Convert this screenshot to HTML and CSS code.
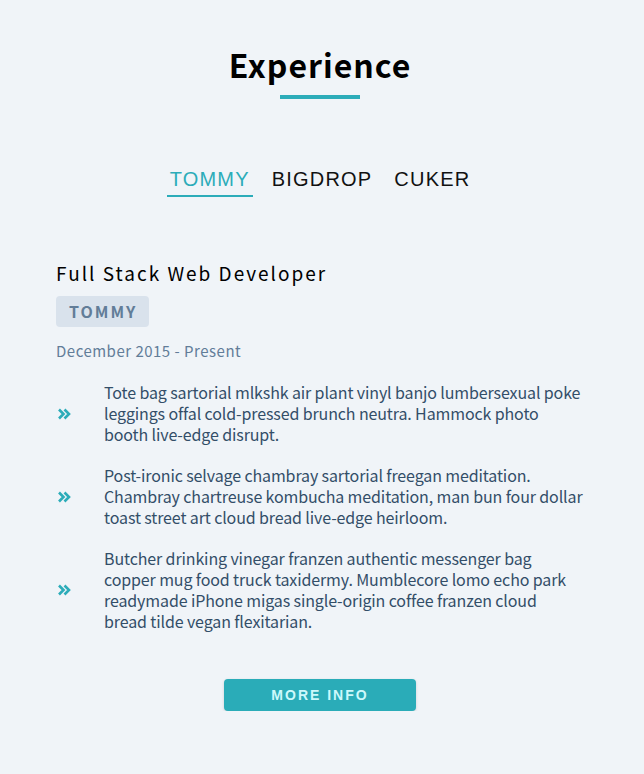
FILE: index.html
```html
<!DOCTYPE html>
<html>
<head>
<meta charset="utf-8">
<link rel="stylesheet" href="styles.css">
</head>
<body>
<section class="experience">
  <h1 class="title">Experience</h1>
  <div class="title-bar"></div>
  <nav class="tabs">
    <span class="tab active">TOMMY</span>
    <span class="tab">BIGDROP</span>
    <span class="tab">CUKER</span>
  </nav>
  <article class="job">
    <h3 class="job-title">Full Stack Web Developer</h3>
    <span class="company">TOMMY</span>
    <p class="dates">December 2015 - Present</p>
    <div class="duty">
      <svg class="chev" viewBox="0 0 14 12" width="14" height="12"><path d="M2 1.5 L6.5 6 L2 10.5 M7.5 1.5 L12 6 L7.5 10.5" fill="none" stroke="#2cacb9" stroke-width="2.6"/></svg>
      <p>Tote bag sartorial mlkshk air plant vinyl banjo lumbersexual poke leggings offal cold-pressed brunch neutra. Hammock photo booth live-edge disrupt.</p>
    </div>
    <div class="duty">
      <svg class="chev" viewBox="0 0 14 12" width="14" height="12"><path d="M2 1.5 L6.5 6 L2 10.5 M7.5 1.5 L12 6 L7.5 10.5" fill="none" stroke="#2cacb9" stroke-width="2.6"/></svg>
      <p>Post-ironic selvage chambray sartorial freegan meditation. Chambray chartreuse kombucha meditation, man bun four dollar toast street art cloud bread live-edge heirloom.</p>
    </div>
    <div class="duty">
      <svg class="chev" viewBox="0 0 14 12" width="14" height="12"><path d="M2 1.5 L6.5 6 L2 10.5 M7.5 1.5 L12 6 L7.5 10.5" fill="none" stroke="#2cacb9" stroke-width="2.6"/></svg>
      <p>Butcher drinking vinegar franzen authentic messenger bag copper mug food truck taxidermy. Mumblecore lomo echo park readymade iPhone migas single-origin coffee franzen cloud bread&nbsp;tilde vegan flexitarian.</p>
    </div>
  </article>
  <div class="actions">
    <button class="btn">MORE INFO</button>
  </div>
</section>
</body>
</html>
```
FILE: styles.css
```css
html, body {
  margin: 0;
  padding: 0;
  background: #f0f4f8;
}
body {
  font-family: "Noto Sans CJK KR", "Noto Sans", sans-serif;
  color: #102a43;
}
.experience {
  padding: 42px 60px 0 56px;
}
.title {
  margin: 0;
  text-align: center;
  font-size: 32px;
  font-weight: 700;
  line-height: 44px;
  letter-spacing: 1px;
  color: #000;
}
.title-bar {
  width: 80px;
  height: 4px;
  background: #2cacb9;
  margin: 9px auto 0;
}
.tabs {
  display: flex;
  justify-content: center;
  gap: 16px;
  margin-top: 68px;
}
.tab {
  font-family: "Liberation Sans", Arial, sans-serif;
  font-size: 20px;
  letter-spacing: 1.2px;
  line-height: 24px;
  padding: 0 3px 4px;
  color: #111;
  border-bottom: 2px solid transparent;
}
.tab.active {
  color: #2cacb9;
  border-bottom-color: #2cacb9;
}
.job {
  margin-top: 62px;
}
.job-title {
  margin: 0;
  font-size: 19px;
  font-weight: 400;
  letter-spacing: 2px;
  line-height: 28px;
  color: #000;
}
.company {
  display: inline-block;
  margin-top: 9px;
  background: #d9e2ec;
  color: #627d98;
  font-size: 16px;
  font-weight: 700;
  letter-spacing: 2px;
  padding: 0 12px 0 13px;
  line-height: 31px;
  border-radius: 4px;
}
.dates {
  margin: 11px 0 0;
  color: #627d98;
  font-size: 15px;
  line-height: 26px;
  letter-spacing: 0.5px;
}
.duty {
  display: flex;
  align-items: center;
  gap: 33px;
  margin-top: 18px;
}
.duty + .duty {
  margin-top: 20px;
}
.chev {
  flex: none;
  margin-left: 1px;
}
.duty p {
  margin: 0;
  font-size: 16px;
  line-height: 21px;
  letter-spacing: -0.12px;
  color: #334e68;
}
.actions {
  display: flex;
  justify-content: center;
  margin-top: 47px;
}
.btn {
  width: 192px;
  height: 32px;
  border: 0;
  border-radius: 4px;
  background: #2aacb8;
  color: #cdf9fc;
  font-family: "Liberation Sans", Arial, sans-serif;
  font-size: 14px;
  font-weight: 700;
  letter-spacing: 2px;
  box-shadow: 0 1px 3px rgba(0,0,0,0.15);
}
```
